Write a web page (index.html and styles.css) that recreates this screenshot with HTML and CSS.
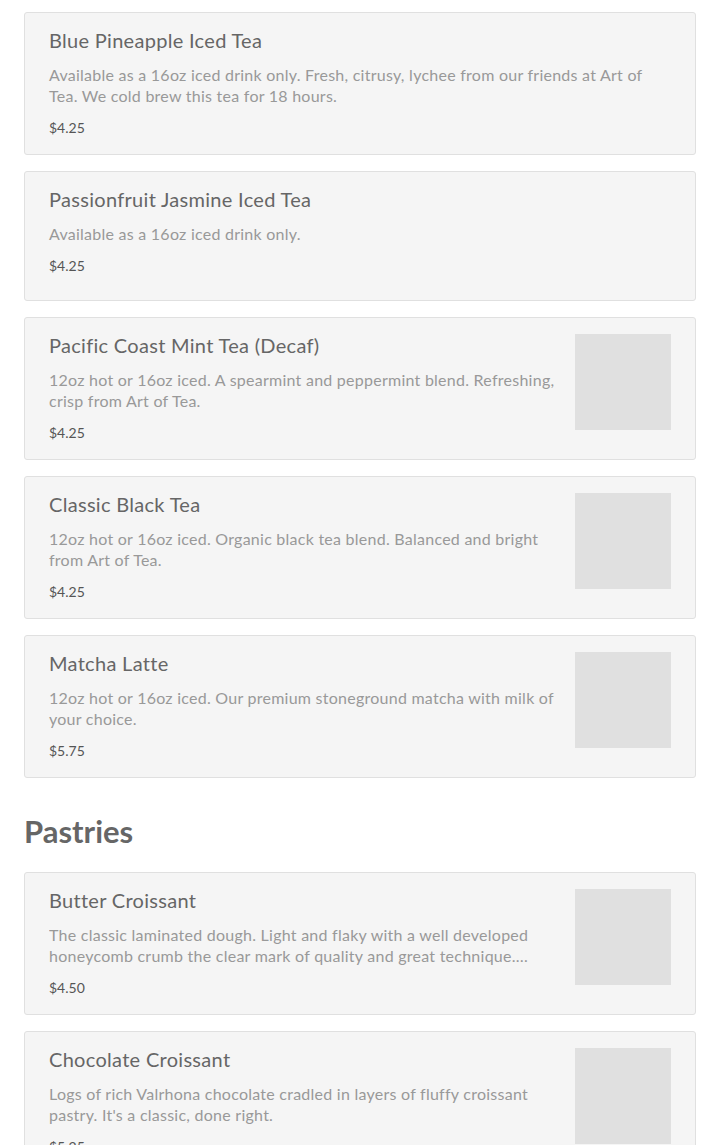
FILE: index.html
```html
<!DOCTYPE html>
<html lang="en">
<head>
<meta charset="utf-8">
<title>Menu</title>
<link rel="stylesheet" href="styles.css">
</head>
<body>
<main class="menu">
  <section class="section">
    <article class="item">
      <div class="item-text">
        <h3 class="item-title">Blue Pineapple Iced Tea</h3>
        <p class="item-desc">Available as a 16oz iced drink only. Fresh, citrusy, lychee from our friends at Art of Tea. We cold brew this tea for 18 hours.</p>
        <p class="item-price">$4.25</p>
      </div>
    </article>
    <article class="item">
      <div class="item-text">
        <h3 class="item-title">Passionfruit Jasmine Iced Tea</h3>
        <p class="item-desc">Available as a 16oz iced drink only.</p>
        <p class="item-price">$4.25</p>
      </div>
    </article>
    <article class="item">
      <div class="item-text">
        <h3 class="item-title">Pacific Coast Mint Tea (Decaf)</h3>
        <p class="item-desc">12oz hot or 16oz iced. A spearmint and peppermint blend. Refreshing, crisp from Art of Tea.</p>
        <p class="item-price">$4.25</p>
      </div>
      <div class="item-img"></div>
    </article>
    <article class="item">
      <div class="item-text">
        <h3 class="item-title">Classic Black Tea</h3>
        <p class="item-desc">12oz hot or 16oz iced. Organic black tea blend. Balanced and bright from Art of Tea.</p>
        <p class="item-price">$4.25</p>
      </div>
      <div class="item-img"></div>
    </article>
    <article class="item">
      <div class="item-text">
        <h3 class="item-title">Matcha Latte</h3>
        <p class="item-desc">12oz hot or 16oz iced. Our premium stoneground matcha with milk of your choice.</p>
        <p class="item-price">$5.75</p>
      </div>
      <div class="item-img"></div>
    </article>
  </section>
  <section class="section">
    <h2 class="section-title">Pastries</h2>
    <article class="item">
      <div class="item-text">
        <h3 class="item-title">Butter Croissant</h3>
        <p class="item-desc clamp">The classic laminated dough. Light and flaky with a well developed honeycomb crumb the clear mark of quality and great technique. Baked fresh every morning.</p>
        <p class="item-price">$4.50</p>
      </div>
      <div class="item-img"></div>
    </article>
    <article class="item">
      <div class="item-text">
        <h3 class="item-title">Chocolate Croissant</h3>
        <p class="item-desc">Logs of rich Valrhona chocolate cradled in layers of fluffy croissant pastry. It's a classic, done right.</p>
        <p class="item-price">$5.25</p>
      </div>
      <div class="item-img"></div>
    </article>
  </section>
</main>
</body>
</html>
```
FILE: styles.css
```css
* { box-sizing: border-box; }
html, body { margin: 0; padding: 0; background: #fff; }
body { font-family: Lato, "Liberation Sans", sans-serif; }
.menu { padding: 12px 24px; }
.section { display: flex; flex-direction: column; gap: 16px; }
.section + .section { margin-top: 35px; }
.section-title {
  margin: 0 0 7px;
  font-size: 31px;
  line-height: 36px;
  font-weight: 700;
  color: #666;
}
.item {
  display: flex;
  gap: 16px;
  min-height: 130px;
  padding: 15px 24px 16px;
  background: #f5f5f5;
  border: 1px solid #e0e0e0;
  border-radius: 3px;
}
.item-text { flex: 1; min-width: 0; }
.item-title {
  margin: 0;
  font-size: 20px;
  line-height: 24px;
  font-weight: 400;
  letter-spacing: 0.3px;
  color: #666;
}
.item-desc {
  margin: 11.5px 0 0;
  font-size: 16px;
  line-height: 21px;
  letter-spacing: 0.25px;
  color: #999;
}
.clamp {
  display: -webkit-box;
  -webkit-line-clamp: 2;
  -webkit-box-orient: vertical;
  overflow: hidden;
}
.item-price {
  margin: 12.5px 0 0;
  font-size: 14px;
  line-height: 20px;
  color: #555;
}
.item-img {
  flex: 0 0 96px;
  width: 96px;
  height: 96px;
  margin-top: 1px;
  background: #e0e0e0;
}
```
